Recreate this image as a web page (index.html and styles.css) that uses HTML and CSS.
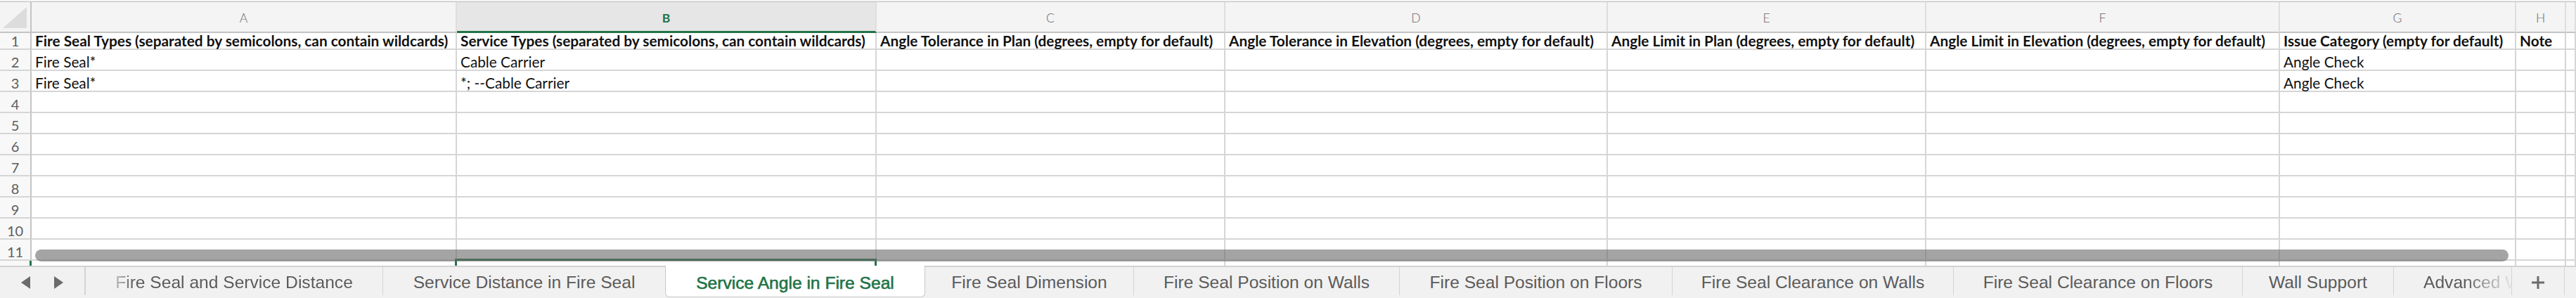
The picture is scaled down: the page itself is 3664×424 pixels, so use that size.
FILE: index.html
```html
<!DOCTYPE html>
<html>
<head>
<meta charset="utf-8">
<link rel="stylesheet" href="styles.css">
</head>
<body>
<div class="app">
  <div class="topline"></div>
  <div class="grid">
    <div class="corner"><svg width="36" height="32" viewBox="0 0 36 32"><polygon points="34,0 34,30 0,30" fill="#dcdcdc"/></svg></div>
    <div class="colh">A</div>
    <div class="colh sel">B</div>
    <div class="colh">C</div>
    <div class="colh">D</div>
    <div class="colh">E</div>
    <div class="colh">F</div>
    <div class="colh">G</div>
    <div class="colh">H</div>
    <div class="colh"></div>

    <div class="rowh">1</div>
    <div class="cell b">Fire Seal Types (separated by semicolons, can contain wildcards)</div>
    <div class="cell b">Service Types (separated by semicolons, can contain wildcards)</div>
    <div class="cell b">Angle Tolerance in Plan (degrees, empty for default)</div>
    <div class="cell b">Angle Tolerance in Elevation (degrees, empty for default)</div>
    <div class="cell b">Angle Limit in Plan (degrees, empty for default)</div>
    <div class="cell b">Angle Limit in Elevation (degrees, empty for default)</div>
    <div class="cell b">Issue Category (empty for default)</div>
    <div class="cell b">Note</div>
    <div class="cell"></div>

    <div class="rowh">2</div>
    <div class="cell">Fire Seal*</div>
    <div class="cell">Cable Carrier</div>
    <div class="cell"></div><div class="cell"></div><div class="cell"></div><div class="cell"></div>
    <div class="cell">Angle Check</div>
    <div class="cell"></div><div class="cell"></div>

    <div class="rowh">3</div>
    <div class="cell">Fire Seal*</div>
    <div class="cell">*; --Cable Carrier</div>
    <div class="cell"></div><div class="cell"></div><div class="cell"></div><div class="cell"></div>
    <div class="cell">Angle Check</div>
    <div class="cell"></div><div class="cell"></div>

    <div class="rowh">4</div><div class="cell"></div><div class="cell"></div><div class="cell"></div><div class="cell"></div><div class="cell"></div><div class="cell"></div><div class="cell"></div><div class="cell"></div><div class="cell"></div>
    <div class="rowh">5</div><div class="cell"></div><div class="cell"></div><div class="cell"></div><div class="cell"></div><div class="cell"></div><div class="cell"></div><div class="cell"></div><div class="cell"></div><div class="cell"></div>
    <div class="rowh">6</div><div class="cell"></div><div class="cell"></div><div class="cell"></div><div class="cell"></div><div class="cell"></div><div class="cell"></div><div class="cell"></div><div class="cell"></div><div class="cell"></div>
    <div class="rowh">7</div><div class="cell"></div><div class="cell"></div><div class="cell"></div><div class="cell"></div><div class="cell"></div><div class="cell"></div><div class="cell"></div><div class="cell"></div><div class="cell"></div>
    <div class="rowh">8</div><div class="cell"></div><div class="cell"></div><div class="cell"></div><div class="cell"></div><div class="cell"></div><div class="cell"></div><div class="cell"></div><div class="cell"></div><div class="cell"></div>
    <div class="rowh">9</div><div class="cell"></div><div class="cell"></div><div class="cell"></div><div class="cell"></div><div class="cell"></div><div class="cell"></div><div class="cell"></div><div class="cell"></div><div class="cell"></div>
    <div class="rowh">10</div><div class="cell"></div><div class="cell"></div><div class="cell"></div><div class="cell"></div><div class="cell"></div><div class="cell"></div><div class="cell"></div><div class="cell"></div><div class="cell"></div>
    <div class="rowh">11</div><div class="cell"></div><div class="cell"></div><div class="cell"></div><div class="cell"></div><div class="cell"></div><div class="cell"></div><div class="cell"></div><div class="cell"></div><div class="cell"></div>
    <div class="rowh active-row"></div><div class="cell"></div><div class="cell active"></div><div class="cell"></div><div class="cell"></div><div class="cell"></div><div class="cell"></div><div class="cell"></div><div class="cell"></div><div class="cell"></div>
  </div>
  <div class="hscroll"></div>
  <div class="tabs">
    <div class="nav">
      <svg width="13" height="18" viewBox="0 0 13 18"><polygon points="13,0 13,18 0,9" fill="#6b6b6b"/></svg>
      <svg width="13" height="18" viewBox="0 0 13 18"><polygon points="0,0 0,18 13,9" fill="#6b6b6b"/></svg>
    </div>
    <div class="tab first w423"><span>Fire Seal and Service Distance</span></div>
    <div class="tab noline w401"><span>Service Distance in Fire Seal</span></div>
    <div class="tab current w370"><span>Service Angle in Fire Seal</span></div>
    <div class="tab w297"><span>Fire Seal Dimension</span></div>
    <div class="tab w378"><span>Fire Seal Position on Walls</span></div>
    <div class="tab w388"><span>Fire Seal Position on Floors</span></div>
    <div class="tab w400"><span>Fire Seal Clearance on Walls</span></div>
    <div class="tab w411"><span>Fire Seal Clearance on Floors</span></div>
    <div class="tab w215"><span>Wall Support</span></div>
    <div class="tab last w168"><span>Advanced Wall Support</span></div>
    <div class="tab plus w75"><svg width="20" height="20" viewBox="0 0 20 20"><path d="M10 1V19M1 10H19" stroke="#6b6b6b" stroke-width="3"/></svg></div>
  </div>
</div>
</body>
</html>
```
FILE: styles.css
```css
html, body {
  margin: 0;
  padding: 0;
}
body {
  width: 3664px;
  height: 424px;
  overflow: hidden;
  background: #ffffff;
  font-family: Lato, "Liberation Sans", sans-serif;
}
.app {
  position: relative;
  display: flex;
  flex-direction: column;
  height: 424px;
}
.topline {
  height: 2px;
  background: #f4f4f4;
  border-bottom: 1px solid #bdbdbd;
  flex: none;
}
.grid {
  flex: none;
  display: grid;
  grid-template-columns: 45px 605px 597px 496px 544px 453px 503px 336px 71px 1fr;
  grid-template-rows: 44px 24px repeat(11, 30px);
  height: 375px;
  overflow: hidden;
}
.corner {
  background: #f4f4f4;
  border-right: 2px solid #c4c4c4;
  border-bottom: 2px solid #c4c4c4;
  box-sizing: border-box;
  display: flex;
  align-items: flex-end;
  justify-content: flex-end;
  padding: 0 3px 3px 0;
}
.corner svg { display: block; }
.colh {
  box-sizing: border-box;
  background: #f4f4f4;
  border-right: 2px solid #dedede;
  border-bottom: 2px solid #c4c4c4;
  display: flex;
  align-items: center;
  justify-content: center;
  font-size: 17.5px;
  font-weight: 300;
  color: #666666;
  padding-top: 2px;
}
.colh.sel {
  background: #e6e6e6;
  border-bottom: 3px solid #217346;
  color: #217346;
  font-weight: 700;
  padding-top: 3px;
}
.rowh {
  box-sizing: border-box;
  background: #f8f8f8;
  border-right: 2px solid #c4c4c4;
  border-bottom: 2px solid #d6d6d6;
  display: flex;
  align-items: flex-end;
  justify-content: center;
  font-size: 20px;
  line-height: 22px;
  color: #5e5e5e;
}
.rowh.active-row {
  border-right: 3px solid #217346;
}
.cell {
  box-sizing: border-box;
  border-right: 2px solid #d6d6d6;
  border-bottom: 2px solid #d6d6d6;
  display: flex;
  align-items: flex-end;
  padding: 0 4px 0 5px;
  font-size: 20.8px;
  line-height: 22px;
  color: #111111;
  white-space: nowrap;
}
.cell.b {
  font-weight: 700;
}
.cell.active {
  position: relative;
}
.cell.active::after {
  content: "";
  position: absolute;
  left: -3px;
  right: -2px;
  top: -3px;
  bottom: 0;
  border: 3px solid #217346;
  border-bottom: none;
}
.hscroll {
  position: absolute;
  left: 50px;
  top: 355px;
  width: 3518px;
  height: 17px;
  border-radius: 9px;
  background: rgba(106, 106, 106, 0.61);
}
.tabs {
  flex: none;
  display: flex;
  height: 44px;
  background: #f1f1f1;
  border-top: 2px solid #d2d2d2;
  font-family: "Liberation Sans", Arial, sans-serif;
  font-size: 24.6px;
  color: #5b5b5b;
}
.nav {
  width: 122px;
  flex: none;
  display: flex;
  align-items: center;
  gap: 34px;
  padding-left: 30px;
  box-sizing: border-box;
  border-right: 2px solid #d4d4d4;
  margin-bottom: 4px;
}
.nav svg { display: block; margin-top: 4px; }
.tab {
  flex: none;
  box-sizing: border-box;
  display: flex;
  align-items: center;
  justify-content: center;
  border-right: 1.5px solid #d4d4d4;
  margin-bottom: 4px;
  white-space: nowrap;
}
.w423 { width: 423px; }
.w401 { width: 401px; }
.w370 { width: 370px; }
.w297 { width: 297px; }
.w378 { width: 378px; }
.w388 { width: 388px; }
.w400 { width: 400px; }
.w411 { width: 411px; }
.w215 { width: 215px; }
.w168 { width: 168px; }
.w75 { width: 75px; }
.tab span {
  display: block;
  margin-top: 3px;
}
.tab.first span {
  -webkit-mask-image: linear-gradient(to right, rgba(0,0,0,0.35) 0px, #000 26px);
  mask-image: linear-gradient(to right, rgba(0,0,0,0.35) 0px, #000 26px);
}
.tab.noline {
  border-right: none;
}
.tab.current {
  margin-top: -2px;
  margin-bottom: 1px;
  background: #ffffff;
  border: 1.5px solid #c8c8c8;
  border-top: none;
  border-radius: 0 0 6px 6px;
  color: #217346;
  -webkit-text-stroke: 0.6px #217346;
}
.tab.current span { margin-top: 5px; }
.tab.last {
  justify-content: flex-start;
  padding-left: 42px;
}
.tab.last span {
  width: 125px;
  overflow: hidden;
  -webkit-mask-image: linear-gradient(to right, #000 60px, rgba(0,0,0,0.45) 95px, rgba(0,0,0,0.08) 125px);
  mask-image: linear-gradient(to right, #000 60px, rgba(0,0,0,0.45) 95px, rgba(0,0,0,0.08) 125px);
}
.tab.plus svg { display: block; margin-top: 4px; }
```
